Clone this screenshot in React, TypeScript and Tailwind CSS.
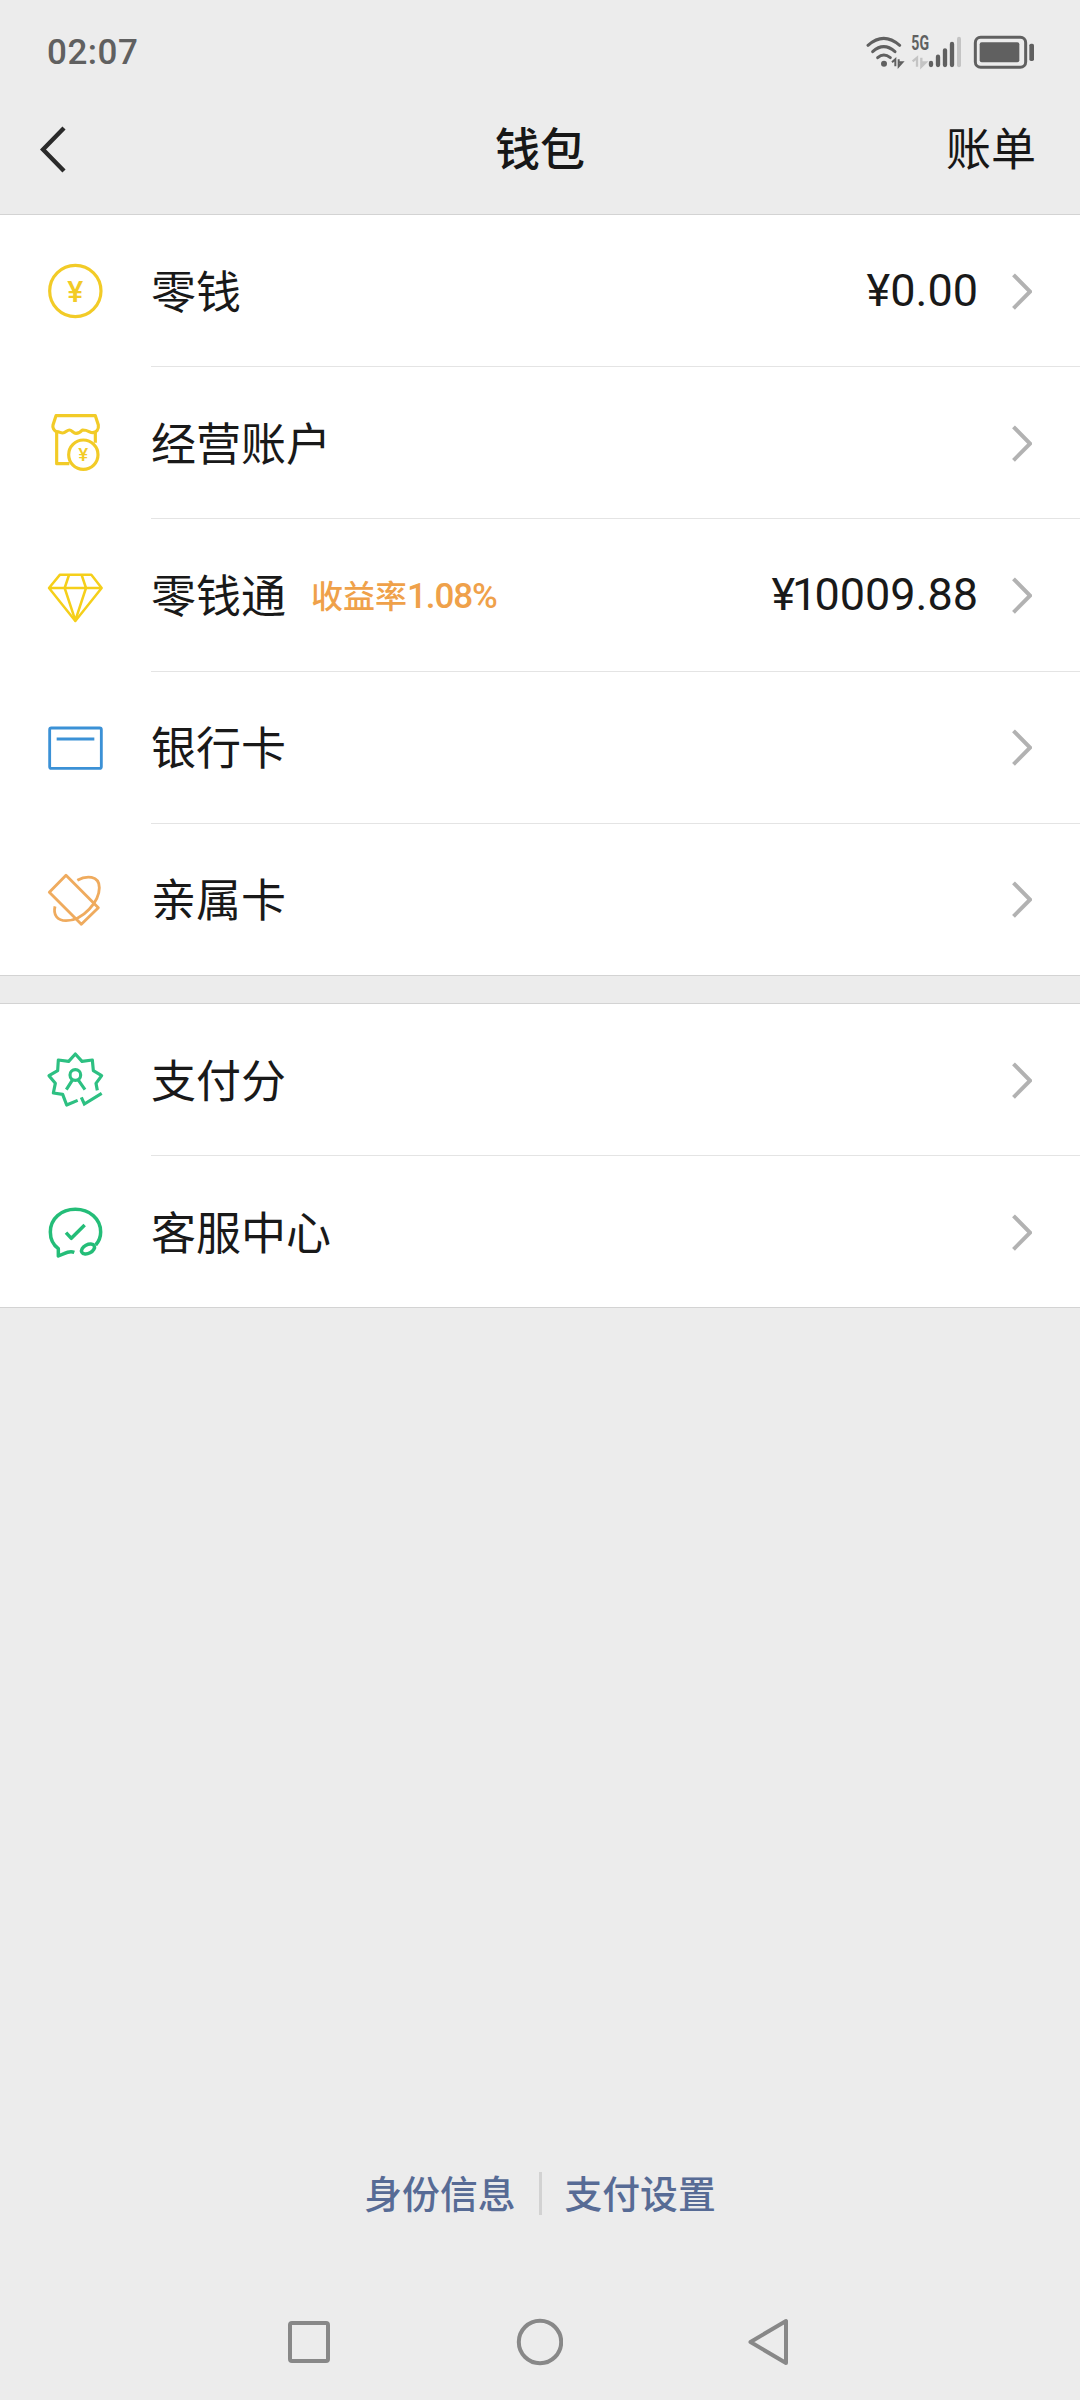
import type { ReactNode } from 'react'
import { clsx } from 'clsx'

interface WalletItem {
  label: string
  icon: ReactNode
  note?: ReactNode
  amount?: ReactNode
}

function Icon({ color, children }: { color: string; children: ReactNode }) {
  return (
    <svg
      viewBox="0 0 192 192"
      className={clsx('size-16 shrink-0', color)}
      fill="none"
      stroke="currentColor"
      strokeWidth="9.5"
      strokeLinejoin="round"
    >
      {children}
    </svg>
  )
}

const coinIcon = (
  <Icon color="text-[#f2cb27]">
    <circle cx="94" cy="96" r="77" />
    <text x="94" y="130" textAnchor="middle" fontSize="90" fontWeight="500" fill="currentColor" stroke="none">¥</text>
  </Icon>
)

const shopIcon = (
  <Icon color="text-[#f2cb27]">
    <path d="M36 14H154L163 42C165 56 157 65 146 65C136 65 132 56 115 57C108 65 103 67 96 67C88 67 84 57 76 57C69 57 65 66 56 66C48 66 48 62 38 62C30 60 25 50 27 42Z" />
    <path d="M38 62V158H76M154 62V95" />
    <circle cx="118" cy="131" r="44" />
    <text x="118" y="151" textAnchor="middle" fontSize="56" fontWeight="500" fill="currentColor" stroke="none">¥</text>
  </Icon>
)

const diamondIcon = (
  <Icon color="text-[#f5cf1a]">
    <g strokeWidth="7.5">
      <path d="M48 35H142L173 75L94 174L15 75ZM15 75H173" />
      <path d="M75 36L62 75L94 172L126 75L113 36" />
    </g>
  </Icon>
)

const bankCardIcon = (
  <Icon color="text-[#3b91d6]">
    <rect x="17" y="36" width="155" height="121" rx="5" strokeWidth="8.5" />
    <path d="M38 69H151" />
  </Icon>
)

const familyCardIcon = (
  <Icon color="text-[#efab5e]">
    <g strokeWidth="8.5">
      <path d="M66 25L163 122L112 172L16 76Z" />
      <path d="M100 40C126 25 166 24 166 62C166 102 118 161 66 161C40 161 27 144 33 118" />
    </g>
  </Icon>
)

const scoreIcon = (
  <Icon color="text-[#2dc082]">
    <path d="M160 127L156 106L173 83L148 68L145 36L114 40L94 18L74 40L43 36L41 68L15 83L34 106L28 135L56 139L68 171L101 157" />
    <circle cx="94" cy="81" r="16" />
    <path d="M86 95L67 125M102 95L123 125" />
    <path d="M112 148L121 168L173 136" strokeLinejoin="miter" />
  </Icon>
)

const serviceIcon = (
  <Icon color="text-[#24bd78]">
    <g strokeWidth="10.5">
      <path d="M91 157C80 153 70 156 60 161L43 168L43 146C28 135 19 118 19 96C19 56 52 28 94 28C136 28 170 56 170 96C170 112 165 124 155 135" />
      <ellipse cx="132" cy="147" rx="21" ry="13" transform="rotate(-28 132 147)" />
      <path d="M66 98L82 115L122 75" />
    </g>
  </Icon>
)

const accountItems: WalletItem[] = [
  { label: '零钱', icon: coinIcon, amount: '¥0.00' },
  { label: '经营账户', icon: shopIcon },
  {
    label: '零钱通',
    icon: diamondIcon,
    note: (
      <>
        收益率<span className="text-[35px] tracking-[-1.1px]">1.08%</span>
      </>
    ),
    amount: (
      <>
        <span className="tracking-[-3px]">¥1</span>0009.88
      </>
    ),
  },
  { label: '银行卡', icon: bankCardIcon },
  { label: '亲属卡', icon: familyCardIcon },
]

const serviceItems: WalletItem[] = [
  { label: '支付分', icon: scoreIcon },
  { label: '客服中心', icon: serviceIcon },
]

function StatusBar() {
  return (
    <div className="flex h-[104px] items-center justify-between pl-[47px] pr-[44px] text-[#606060]">
      <span className="pt-[2px] text-[35px] font-medium tracking-[0.5px]">02:07</span>
      <svg viewBox="138 81 510 150" className="h-[50px] w-[170px]" fill="none" stroke="currentColor">
        <g strokeWidth="9" strokeLinecap="round">
          <path d="M144 136Q191 94 239 136" />
          <path d="M158 155Q191 125 225 155" />
          <path d="M173 173Q191 157 211 173" />
        </g>
        <circle cx="192" cy="191" r="9" fill="currentColor" stroke="none" />
        <path d="M216 187L226 178V199M236 178V199L247 187H236" strokeWidth="6" />
        <text x="274" y="151" fontSize="58" fontWeight="700" textLength="53" lengthAdjust="spacingAndGlyphs" fill="currentColor" stroke="none">5G</text>
        <g className="text-[#c4c4c4]" stroke="currentColor">
          <path d="M278 184L291 173V200M304 173V200L317 187H304" strokeWidth="7" />
          <path d="M417 116V196" strokeWidth="12" strokeLinecap="round" />
        </g>
        <g strokeWidth="13" strokeLinecap="round">
          <path d="M333 189V195M354 170V195M375 151V195M396 132V195" />
        </g>
        <rect x="466" y="112" width="151" height="90" rx="16" strokeWidth="9" />
        <rect x="479" y="127" width="119" height="60" rx="6" fill="currentColor" stroke="none" />
        <rect x="628" y="131" width="14" height="52" rx="5" fill="currentColor" stroke="none" />
      </svg>
    </div>
  )
}

function Header() {
  return (
    <header className="grid h-[110px] grid-cols-[1fr_auto_1fr] items-center pb-[20px] pl-[40px] pr-[44px] text-[45px] leading-[66px] text-[#171717]">
      <svg viewBox="0 0 28 48" className="h-12 w-7" fill="none" stroke="#2a2a2a" strokeWidth="4.4">
        <path d="M24 3L3 24.5L24 46" />
      </svg>
      <h1 className="pt-1 pl-1 text-center font-medium">钱包</h1>
      <span className="pt-1 text-right">账单</span>
    </header>
  )
}

function Row({ item, last }: { item: WalletItem; last: boolean }) {
  return (
    <li className={clsx('flex pl-[44px]', last ? 'h-[151.2px]' : 'h-[152.2px]')}>
      <div className="flex w-[107px] items-center">{item.icon}</div>
      <div className={clsx('flex flex-1 items-center pr-[48px]', !last && 'border-b border-[#e4e4e4]')}>
        <span className="pt-[6px] text-[45px] leading-[66px]">{item.label}</span>
        {item.note && (
          <span className="ml-[25px] pt-[4px] text-[32px] font-medium leading-[48px] text-[#efa14a]">{item.note}</span>
        )}
        <span className="ml-auto text-[45px] leading-[66px]">{item.amount}</span>
        <svg viewBox="0 0 20 40" className="ml-[34px] h-10 w-5" fill="none" stroke="#b2b2b2" strokeWidth="4">
          <path d="M1.5 3.8L18 20.6L1.5 37.3" />
        </svg>
      </div>
    </li>
  )
}

function Group({ items }: { items: WalletItem[] }) {
  return (
    <ul className="border-y border-[#d3d3d3] bg-white">
      {items.map((item, index) => (
        <Row key={item.label} item={item} last={index === items.length - 1} />
      ))}
    </ul>
  )
}

function NavBar() {
  return (
    <nav className="flex h-[116px] items-center justify-between pl-[287px] pr-[289px]">
      <svg viewBox="0 0 44 48" className="h-12 w-11" fill="none" stroke="#888888" strokeWidth="4">
        <rect x="3" y="5" width="38" height="38" rx="2" />
      </svg>
      <svg viewBox="0 0 48 48" className="size-12" fill="none" stroke="#888888" strokeWidth="4">
        <circle cx="25" cy="24" r="21.2" />
      </svg>
      <svg viewBox="0 0 44 48" className="h-12 w-11" fill="none" stroke="#888888" strokeWidth="4" strokeLinejoin="round">
        <path d="M3.5 24L39 3V45Z" />
      </svg>
    </nav>
  )
}

export default function App() {
  return (
    <div className="flex h-[2400px] w-[1080px] flex-col bg-[#ececec] font-[Roboto,'Noto_Sans_CJK_SC',sans-serif] text-[#191919]">
      <StatusBar />
      <Header />
      <main className="flex flex-1 flex-col gap-[27px]">
        <Group items={accountItems} />
        <Group items={serviceItems} />
      </main>
      <footer className="flex h-[182px] items-center justify-center gap-[23px] text-[37.8px] font-medium leading-[56px] text-[#576b95]">
        <span className="pt-[3px]">身份信息</span>
        <span className="h-[43px] w-[3px] bg-[#d2d2d2]" />
        <span className="pt-[3px]">支付设置</span>
      </footer>
      <NavBar />
    </div>
  )
}
